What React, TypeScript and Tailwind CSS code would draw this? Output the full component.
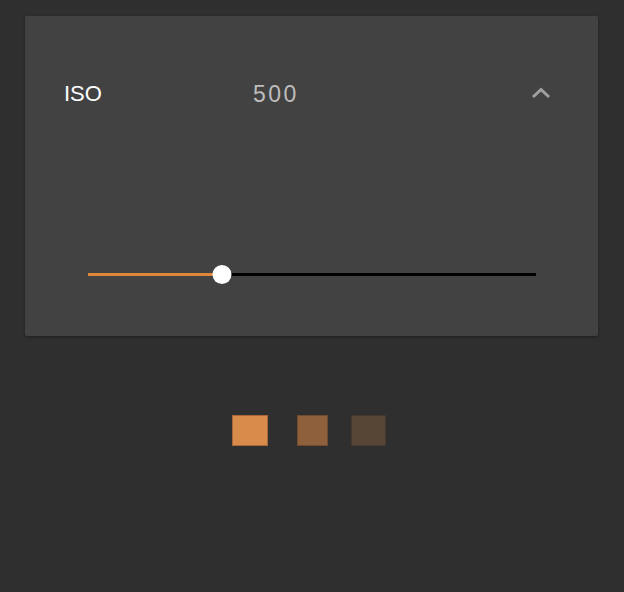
import React from "react";

const swatches = [
	{ color: "bg-[#d98b4b]", border: "border-[#a8683a]", size: "w-[36px]" },
	{ color: "bg-[#8e603b]", border: "border-[#6e4b30]", size: "w-[31px]" },
	{ color: "bg-[#574535]", border: "border-[#46382c]", size: "w-[35px]" },
];

const App: React.FC = () => {
	const value = 30;

	return (
		<div className="min-h-[592px] w-full bg-[#2f2f2f] pt-4 pl-[25px] pr-[26px] font-['Liberation_Sans',Arial,sans-serif]">
			<div className="flex h-[320px] flex-col rounded-[2px] bg-[#424242] pt-[64px] shadow-[0_1px_3px_rgba(0,0,0,0.35)]">
				<div className="flex h-[28px] items-center pl-[39px] pr-[47px] text-[22px] leading-[28px]">
					<span className="w-[189px] text-white">ISO</span>
					<span className="flex-1 text-[23px] tracking-[2.5px] text-[#bdbdbd]">500</span>
					<svg width="20" height="12" viewBox="0 0 20 12" className="mt-[-2px]">
						<path d="M2 10 L10 2.5 L18 10" fill="none" stroke="#a0a0a0" strokeWidth="3" />
					</svg>
				</div>

				<div className="mt-[156px] px-[63px] pr-[62px]">
					<div className="relative flex h-[20px] items-center">
						<div className="h-[3px] bg-[#e0863c]" style={{ width: `${value}%` }} />
						<div className="h-[3px] flex-1 bg-black" />
						<div
							className="absolute top-[0.5px] h-[19px] w-[19px] -translate-x-1/2 rounded-full bg-white"
							style={{ left: `${value}%` }}
						/>
					</div>
				</div>
			</div>

			<div className="mt-[79px] flex items-center justify-center pr-[6px]">
				<div className={`h-[31px] border ${swatches[0].size} ${swatches[0].color} ${swatches[0].border}`} />
				<div className={`ml-[29px] h-[31px] border ${swatches[1].size} ${swatches[1].color} ${swatches[1].border}`} />
				<div className={`ml-[23px] h-[31px] border ${swatches[2].size} ${swatches[2].color} ${swatches[2].border}`} />
			</div>
		</div>
	);
};

export default App;
